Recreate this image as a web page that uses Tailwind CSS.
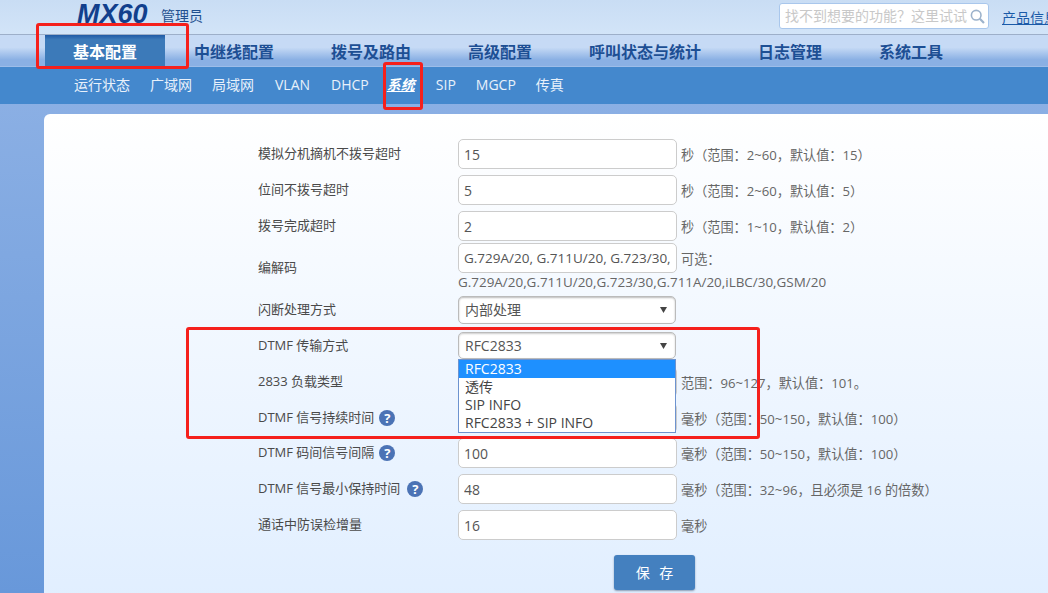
<!DOCTYPE html>
<html lang="zh-CN">
<head>
  <meta charset="UTF-8">
  <title>MX60 基本配置</title>
  <script src="https://cdn.jsdelivr.net/npm/@tailwindcss/browser@4"></script>
</head>
<body class="relative w-[1048px] h-[593px] overflow-hidden bg-gradient-to-b from-[#92b4e6] to-[#6898da] font-['Open_Sans','Noto_Sans_CJK_SC',sans-serif] text-[13px] text-[#555]">

  <!-- top bar -->
  <header class="h-[35px] flex items-start bg-gradient-to-b from-[#c9ddf4] to-[#d2e4f8] border-b border-[#9dafc9] overflow-hidden whitespace-nowrap">
    <div class="shrink-0 ml-[77px] mt-[-6px] w-[84px] text-[27px] leading-[40px] font-bold italic text-[#123f8c] font-['Liberation_Sans',sans-serif]">MX60</div>
    <div class="shrink-0 mt-[6px] w-[42px] text-[14px] leading-[20px] text-[#1f4f8f]">管理员</div>
    <div class="shrink-0 ml-[576px] mt-[3px] w-[210px] h-[26px] flex items-center justify-between pl-[5px] pr-[3px] bg-white border border-[#a9c7ec] rounded-[3px]">
      <span class="text-[14px] leading-[20px] text-[#c8c8c8]">找不到想要的功能&#xFF1F;这里试试</span>
      <svg class="w-[15px] h-[15px]" viewBox="0 0 15 15" fill="none" stroke="#9db3cc" stroke-width="1.6"><circle cx="6.2" cy="6.2" r="4.8"/><path d="M9.8 9.8 14 14" stroke-width="2.2"/></svg>
    </div>
    <a class="shrink-0 ml-[13px] mt-[8px] text-[14px] leading-[20px] text-[#1a5aa8] underline">产品信息</a>
  </header>

  <!-- main nav -->
  <nav class="h-[32px] flex pl-[45px] bg-gradient-to-b from-[#c6daf5] from-40% to-[#8ab0e4] to-80% border-b border-[#9dbde9] text-[16px] leading-[34px] font-bold text-[#1d4f94]">
    <a class="px-7 h-[32px] mr-[0.5px] text-white bg-gradient-to-b from-[#1f5aa6] from-0% to-[#3c7ab9] to-15%">基本配置</a>
    <a class="px-[28.5px]">中继线配置</a>
    <a class="px-[28.5px]">拨号及路由</a>
    <a class="px-[28.5px]">高级配置</a>
    <a class="px-[28.5px]">呼叫状态与统计</a>
    <a class="px-[28.5px]">日志管理</a>
    <a class="px-[28.5px]">系统工具</a>
  </nav>

  <!-- sub nav -->
  <nav class="h-[37px] flex items-center gap-5 pl-[74px] pb-[2px] bg-[#4488cd] text-[14px] text-[#e8f1fb]">
    <a>运行状态</a>
    <a>广域网</a>
    <a>局域网</a>
    <a class="ml-[1px]">VLAN</a>
    <a class="ml-[1px] mr-[-2px]">DHCP</a>
    <a class="font-bold italic underline text-white">系统</a>
    <a class="ml-[1px]">SIP</a>
    <a>MGCP</a>
    <a>传真</a>
  </nav>

  <!-- content card -->
  <main class="ml-[44px] mt-[10px] h-[500px] pl-[214px] pt-[25px] bg-gradient-to-b from-white to-[#e0eeff] rounded-tl-[6px]">
    <div class="flex items-center h-[30px]">
      <label class="w-[200px] text-[#4a4a4a]">模拟分机摘机不拨号超时</label>
      <input value="15" class="w-[219px] h-[30px] px-[5px] text-[14px] bg-white border border-[#ccc] rounded-[5px] text-[#555]">
      <span class="ml-[4px] mt-[3px] text-[13.15px] text-[#666]">秒&#xFF08;范围&#xFF1A;2~60&#xFF0C;默认值&#xFF1A;15&#xFF09;</span>
    </div>
    <div class="flex items-center h-[30px] mt-[6px]">
      <label class="w-[200px] text-[#4a4a4a]">位间不拨号超时</label>
      <input value="5" class="w-[219px] h-[30px] px-[5px] text-[14px] bg-white border border-[#ccc] rounded-[5px] text-[#555]">
      <span class="ml-[4px] mt-[3px] text-[13.15px] text-[#666]">秒&#xFF08;范围&#xFF1A;2~60&#xFF0C;默认值&#xFF1A;5&#xFF09;</span>
    </div>
    <div class="flex items-center h-[30px] mt-[6px]">
      <label class="w-[200px] text-[#4a4a4a]">拨号完成超时</label>
      <input value="2" class="w-[219px] h-[30px] px-[5px] text-[14px] bg-white border border-[#ccc] rounded-[5px] text-[#555]">
      <span class="ml-[4px] mt-[3px] text-[13.15px] text-[#666]">秒&#xFF08;范围&#xFF1A;1~10&#xFF0C;默认值&#xFF1A;2&#xFF09;</span>
    </div>
    <div class="flex items-center h-[47px] mt-[3px]">
      <label class="w-[200px] text-[#4a4a4a]">编解码</label>
      <div class="w-[400px]">
        <div class="flex items-center h-[30px]">
          <input value="G.729A/20, G.711U/20, G.723/30, G.711A/20" class="w-[219px] h-[30px] pl-[5px] pr-[2px] text-[13.5px] bg-white border border-[#ccc] rounded-[5px] text-[#555]">
          <span class="ml-[4px] mt-[3px] text-[13.15px] text-[#666]">可选&#xFF1A;</span>
        </div>
        <div class="text-[13.45px] text-[#666] leading-[19px] whitespace-nowrap">G.729A/20,G.711U/20,G.723/30,G.711A/20,iLBC/30,GSM/20</div>
      </div>
    </div>
    <div class="flex items-center h-[28px] mt-[5px]">
      <label class="w-[200px] text-[#4a4a4a]">闪断处理方式</label>
      <div class="relative w-[218px] h-[28px] pl-[6px] leading-[26px] text-[14px] bg-white border border-[#bbb] rounded-[5px] shadow-[inset_0_1px_2px_#bbb] text-[#555]">
        内部处理
        <svg class="absolute right-[8px] top-[9px] w-[7px] h-[7px]" viewBox="0 0 8 8"><path d="M0 1h8L4 8z" fill="#444"/></svg>
      </div>
    </div>
    <div class="flex items-start h-[27px] mt-[8px]">
      <label class="w-[200px] text-[#4a4a4a] leading-[26px]">DTMF 传输方式</label>
      <div class="relative w-[218px] h-[27px] pl-[6px] leading-[26px] text-[14px] bg-white border border-[#bbb] rounded-[5px] shadow-[inset_0_1px_2px_#ccc] text-[#555]">
        RFC2833
        <svg class="absolute right-[8px] top-[9px] w-[7px] h-[7px]" viewBox="0 0 8 8"><path d="M0 1h8L4 8z" fill="#444"/></svg>
        <!-- open dropdown -->
        <ul class="absolute z-10 left-[-1px] top-[26px] w-[218px] bg-white border border-[#6d93cf] text-[14px] leading-[18px] text-[#444]">
          <li class="pl-[6px] bg-[#1e90ff] text-white">RFC2833</li>
          <li class="pl-[6px]">透传</li>
          <li class="pl-[6px]">SIP INFO</li>
          <li class="pl-[6px]">RFC2833 + SIP INFO</li>
        </ul>
      </div>
    </div>
    <div class="flex items-center h-[30px] mt-[8px]">
      <label class="w-[200px] text-[#4a4a4a]">2833 负载类型</label>
      <input value="101" class="w-[219px] h-[30px] px-[5px] text-[14px] bg-white border border-[#ccc] rounded-[5px] text-[#555]">
      <span class="ml-[4px] mt-[3px] text-[13.15px] text-[#666]">范围&#xFF1A;96~127&#xFF0C;默认值&#xFF1A;101&#x3002;</span>
    </div>
    <div class="flex items-center h-[30px] mt-[6px]">
      <label class="w-[200px] flex items-center gap-[5px] text-[#4a4a4a]">DTMF 信号持续时间
        <span class="w-[16px] h-[16px] rounded-full bg-[#4b73b5] text-white text-[13px] font-bold leading-[16px] text-center">?</span></label>
      <input value="100" class="w-[219px] h-[30px] px-[5px] text-[14px] bg-white border border-[#ccc] rounded-[5px] text-[#555]">
      <span class="ml-[4px] mt-[3px] text-[13.15px] text-[#666]">毫秒&#xFF08;范围&#xFF1A;50~150&#xFF0C;默认值&#xFF1A;100&#xFF09;</span>
    </div>
    <div class="flex items-center h-[30px] mt-[5px]">
      <label class="w-[200px] flex items-center gap-[5px] text-[#4a4a4a]">DTMF 码间信号间隔
        <span class="w-[16px] h-[16px] rounded-full bg-[#4b73b5] text-white text-[13px] font-bold leading-[16px] text-center">?</span></label>
      <input value="100" class="w-[219px] h-[30px] px-[5px] text-[14px] bg-white border border-[#ccc] rounded-[5px] text-[#555]">
      <span class="ml-[4px] mt-[3px] text-[13.15px] text-[#666]">毫秒&#xFF08;范围&#xFF1A;50~150&#xFF0C;默认值&#xFF1A;100&#xFF09;</span>
    </div>
    <div class="flex items-center h-[30px] mt-[6px]">
      <label class="w-[200px] flex items-center gap-[7px] text-[#4a4a4a]">DTMF 信号最小保持时间
        <span class="w-[16px] h-[16px] rounded-full bg-[#4b73b5] text-white text-[13px] font-bold leading-[16px] text-center">?</span></label>
      <input value="48" class="w-[219px] h-[30px] px-[5px] text-[14px] bg-white border border-[#ccc] rounded-[5px] text-[#555]">
      <span class="ml-[4px] mt-[3px] text-[13.15px] text-[#666]">毫秒&#xFF08;范围&#xFF1A;32~96&#xFF0C;且必须是 16 的倍数&#xFF09;</span>
    </div>
    <div class="flex items-center h-[30px] mt-[6px]">
      <label class="w-[200px] text-[#4a4a4a]">通话中防误检增量</label>
      <input value="16" class="w-[219px] h-[30px] px-[5px] text-[14px] bg-white border border-[#ccc] rounded-[5px] text-[#555]">
      <span class="ml-[4px] mt-[3px] text-[13.15px] text-[#666]">毫秒</span>
    </div>
    <button class="block ml-[356px] mt-[15px] w-[81px] h-[35px] pl-[3px] bg-[#4480bf] rounded-[3px] shadow-[0_1px_2px_#8a9bb3] text-[14px] tracking-[3px] text-white">保 存</button>
  </main>

  <!-- red annotation boxes -->
  <div class="absolute z-20 left-[36px] top-[23px] w-[153px] h-[46px] border-[3px] border-[#f5201c] rounded-[3px]"></div>
  <div class="absolute z-20 left-[383px] top-[62px] w-[40px] h-[48px] border-[3px] border-[#f5201c] rounded-[3px]"></div>
  <div class="absolute z-20 left-[186px] top-[327px] w-[574px] h-[112px] border-[3px] border-[#f5201c] rounded-[3px]"></div>
</body>
</html>
